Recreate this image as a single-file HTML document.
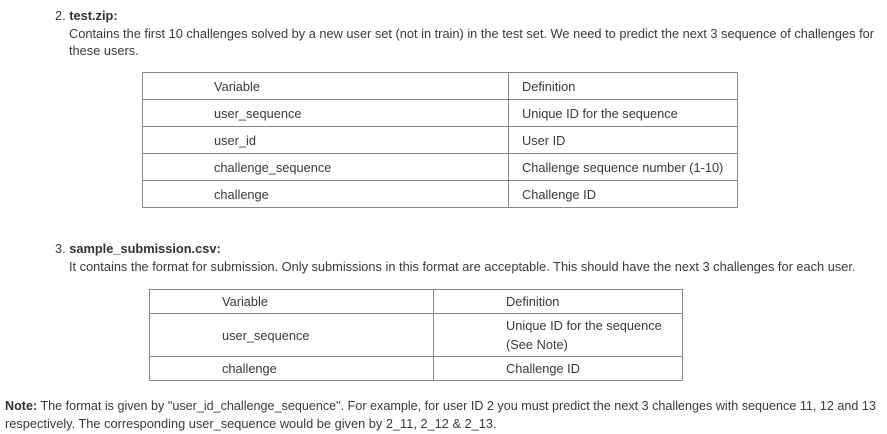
<!DOCTYPE html>
<html><head><style>
body{margin:0;background:#fff;font-family:"Liberation Sans",sans-serif;font-size:12.8px;color:#3a3a3a;position:relative;width:887px;height:434px;overflow:hidden}
.t{position:absolute;white-space:nowrap;line-height:17px}
b{color:#333}
table{position:absolute;border-collapse:collapse;border:1px solid #333}
td{border:1px solid #888;padding:0;font-size:12.8px;color:#3a3a3a}
</style></head><body>
<div class="t" style="left:55px;top:7px">2. <b>test.zip:</b></div>
<div class="t" style="left:69px;top:25px">Contains the first 10 challenges solved by a new user set (not in train) in the test set. We need to predict the next 3 sequence of challenges for</div>
<div class="t" style="left:69px;top:42px">these users.</div>
<table style="left:142px;top:72px;width:596px">
<tr style="height:27px"><td style="width:366px;padding-left:71px;box-sizing:border-box">Variable</td><td style="padding-left:13px">Definition</td></tr>
<tr style="height:27px"><td style="padding-left:71px">user_sequence</td><td style="padding-left:13px">Unique ID for the sequence</td></tr>
<tr style="height:27px"><td style="padding-left:71px">user_id</td><td style="padding-left:13px">User ID</td></tr>
<tr style="height:27px"><td style="padding-left:71px">challenge_sequence</td><td style="padding-left:13px">Challenge sequence number (1-10)</td></tr>
<tr style="height:27px"><td style="padding-left:71px">challenge</td><td style="padding-left:13px">Challenge ID</td></tr>
</table>
<div class="t" style="left:55px;top:240px">3. <b>sample_submission.csv:</b></div>
<div class="t" style="left:69px;top:258px">It contains the format for submission. Only submissions in this format are acceptable. This should have the next 3 challenges for each user.</div>
<table style="left:149px;top:289px;width:534px">
<tr style="height:24px"><td style="width:284px;padding-left:72px;box-sizing:border-box">Variable</td><td style="padding-left:72px">Definition</td></tr>
<tr style="height:43px"><td style="padding-left:72px">user_sequence</td><td style="padding-left:72px;line-height:19px">Unique ID for the sequence<br>(See Note)</td></tr>
<tr style="height:24px"><td style="padding-left:72px">challenge</td><td style="padding-left:72px">Challenge ID</td></tr>
</table>
<div class="t" style="left:5px;top:398px;font-size:12.6px"><b>Note:</b> The format is given by "user_id_challenge_sequence". For example, for user ID 2 you must predict the next 3 challenges with sequence 11, 12 and 13</div>
<div class="t" style="left:5px;top:415px">respectively. The corresponding user_sequence would be given by 2_11, 2_12 &amp; 2_13.</div>
</body></html>
